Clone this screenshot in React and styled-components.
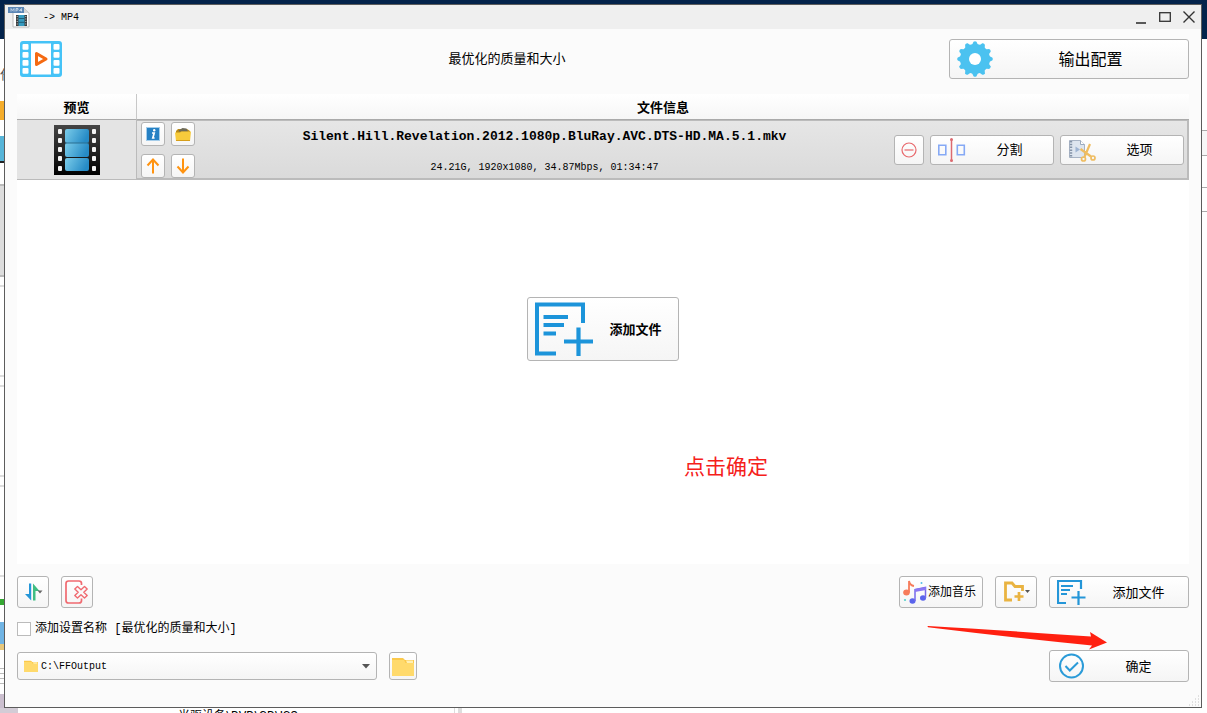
import { useState } from "react";
import styled, { createGlobalStyle } from "styled-components";

function FormatWindow() {
  const [addSettingName, setAddSettingName] = useState(false);
  const [outputPath, setOutputPath] = useState("C:\\FFOutput");

  return (
    <Window>
      <TitleBar>
        <Mp4Icon />
        <Title>-&gt; MP4</Title>
        <WindowButtons>
          <WindowButton aria-label="最小化">
            <svg width="12" height="14" viewBox="0 0 12 14">
              <path d="M1 13h10" stroke="#333" strokeWidth="1.6" />
            </svg>
          </WindowButton>
          <WindowButton aria-label="最大化">
            <svg width="12" height="14" viewBox="0 0 12 14">
              <rect x="0.7" y="2.7" width="10.6" height="8.6" fill="none" stroke="#333" strokeWidth="1.3" />
            </svg>
          </WindowButton>
          <WindowButton aria-label="关闭">
            <svg width="12" height="14" viewBox="0 0 12 14">
              <path d="M0.5 1.5l11 11M11.5 1.5l-11 11" stroke="#333" strokeWidth="1.4" />
            </svg>
          </WindowButton>
        </WindowButtons>
      </TitleBar>

      <Content>
        <Header>
          <VideoIcon />
          <Quality>最优化的质量和大小</Quality>
          <Button $width="240px" $height="40px" $size="16px">
            <GearIcon />
            <Label>输出配置</Label>
          </Button>
        </Header>

        <FileArea>
          <FileTable>
            <thead>
              <tr>
                <PreviewHead>预览</PreviewHead>
                <InfoHead>文件信息</InfoHead>
              </tr>
            </thead>
            <tbody>
              <tr>
                <PreviewCell>
                  <FilmIcon />
                </PreviewCell>
                <InfoCell>
                  <FileRow>
                    <MiniButtons>
                      <Button $width="24px" $height="24px" $icon aria-label="信息">
                        <InfoIcon />
                      </Button>
                      <Button $width="24px" $height="24px" $icon aria-label="打开文件夹">
                        <OpenFolderIcon />
                      </Button>
                      <Button $width="24px" $height="24px" $icon aria-label="上移">
                        <MoveIcon d="M8 15.5V1.5M2.5 7.5L8 1.5L13.5 7.5" />
                      </Button>
                      <Button $width="24px" $height="24px" $icon aria-label="下移">
                        <MoveIcon d="M8 0.5V14.5M2.5 8.5L8 14.5L13.5 8.5" />
                      </Button>
                    </MiniButtons>
                    <FileText>
                      <FileName>Silent.Hill.Revelation.2012.1080p.BluRay.AVC.DTS-HD.MA.5.1.mkv</FileName>
                      <FileDetails>24.21G, 1920x1080, 34.87Mbps, 01:34:47</FileDetails>
                    </FileText>
                    <RowActions>
                      <Button $width="30px" $height="30px" $icon aria-label="移除">
                        <RemoveIcon />
                      </Button>
                      <Button $width="124px" $height="30px">
                        <SplitIcon />
                        <Label>分割</Label>
                      </Button>
                      <Button $width="124px" $height="30px">
                        <OptionIcon />
                        <Label>选项</Label>
                      </Button>
                    </RowActions>
                  </FileRow>
                </InfoCell>
              </tr>
            </tbody>
          </FileTable>
          <CenterButton $width="152px" $height="64px" $bold>
            <AddFileIcon width="58" height="54" thick />
            <Label>添加文件</Label>
          </CenterButton>
          <Hint>点击确定</Hint>
        </FileArea>

        <Toolbar>
          <ButtonGroup>
            <Button $width="32px" $height="32px" $icon aria-label="排序">
              <SortIcon />
            </Button>
            <Button $width="32px" $height="32px" $icon aria-label="清空列表">
              <ClearIcon />
            </Button>
          </ButtonGroup>
          <ButtonGroup>
            <Button $width="84px" $height="32px" $size="12px" $tight>
              <MusicIcon />
              <Label>添加音乐</Label>
            </Button>
            <Button $width="42px" $height="32px" $icon aria-label="添加文件夹">
              <AddFolderIcon />
            </Button>
            <Button $width="140px" $height="32px">
              <AddFileIcon width="32" height="26" />
              <Label>添加文件</Label>
            </Button>
          </ButtonGroup>
        </Toolbar>

        <CheckLabel>
          <Checkbox
            type="checkbox"
            checked={addSettingName}
            onChange={(e) => setAddSettingName(e.target.checked)}
          />
          添加设置名称 [最优化的质量和大小]
        </CheckLabel>

        <Footer>
          <ButtonGroup>
            <SelectBox>
              <FolderIcon width="14" height="12" />
              <Select
                aria-label="输出文件夹"
                value={outputPath}
                onChange={(e) => setOutputPath(e.target.value)}
              >
                <option>C:\FFOutput</option>
              </Select>
              <Caret width="8" height="5" viewBox="0 0 8 5">
                <path d="M0 0h8L4 4.5z" fill="#555" />
              </Caret>
            </SelectBox>
            <Button $width="28px" $height="28px" $icon aria-label="浏览">
              <FolderIcon width="22" height="19" />
            </Button>
          </ButtonGroup>
          <Button $width="140px" $height="32px">
            <OkIcon />
            <Label>确定</Label>
          </Button>
          <Arrow width="180" height="28" viewBox="0 0 180 28">
            <path d="M1 1Q0 1.5 1 2.3Q80 12 165 20.5L162 24.5L180 17.5L163 7L164 11.5Q70 5 1 1Z" fill="#ff2010" />
          </Arrow>
        </Footer>
      </Content>
      <Grip width="12" height="12" viewBox="0 0 12 12">
        <path
          d="M10 2h1M7 5h1M10 5h1M4 8h1M7 8h1M10 8h1M1 11h1M4 11h1M7 11h1M10 11h1"
          stroke="#c4c4c4"
        />
      </Grip>
    </Window>
  );
}

function App() {
  return (
    <Desktop>
      <GlobalStyle />
      <Middle>
        <LeftEdge>任</LeftEdge>
        <FormatWindow />
        <RightEdge />
      </Middle>
      <BottomEdge>光驱设备\DVD\CD\ISO</BottomEdge>
    </Desktop>
  );
}

function Mp4Icon() {
  return (
    <svg width="22" height="22" viewBox="0 0 22 22">
      <path d="M5 2h11l5 5v14H5z" fill="#fff" stroke="#bbb" />
      <path d="M16 2l5 5h-5z" fill="#d5d5d5" />
      <rect x="0" y="1" width="16" height="6" fill="#5b86b5" />
      <path
        d="M3 5.500v-3l1.500 2 1.500-2v3M8 5.500v-3h2v1.600h-2M13.500 5.500v-3l-2 2h2.600"
        fill="none"
        stroke="#dfe9f3"
        strokeWidth="0.7"
      />
      <rect x="8" y="9" width="11" height="11" fill="#3c3c3c" />
      <rect x="10.5" y="9" width="6" height="11" fill="#369bc0" />
      <path d="M10.5 12.5h6M10.5 16.3h6" stroke="#215c75" />
      <path d="M9.2 10v10M17.8 10v10" stroke="#ccc" strokeDasharray="1 1.5" />
    </svg>
  );
}

function VideoIcon() {
  const holes = [3, 11, 19, 27];
  return (
    <svg width="48" height="36" viewBox="0 0 48 36">
      <rect x="3" y="0" width="42" height="36" rx="3" fill="#45c3f7" />
      <rect x="14" y="2.5" width="20" height="31" fill="#fff" />
      {holes.map((y) => (
        <g key={y} fill="#fff">
          <rect x="5.5" y={y} width="6" height="5.8" rx="1" />
          <rect x="36.5" y={y} width="6" height="5.8" rx="1" />
        </g>
      ))}
      <path d="M19.5 12.5v11L29 18z" fill="none" stroke="#f56a12" strokeWidth="3" strokeLinejoin="round" />
    </svg>
  );
}

function GearIcon() {
  const teeth = Array.from({ length: 12 }, (_, i) => i * 30);
  return (
    <svg width="36" height="36" viewBox="0 0 36 36">
      <g fill="#4bc2f0">
        <circle cx="18" cy="18" r="15" />
        {teeth.map((angle) => (
          <path
            key={angle}
            d="M14.5 5L16.5 0.8Q18 -0.4 19.5 0.8L21.5 5z"
            transform={`rotate(${angle} 18 18)`}
          />
        ))}
      </g>
      <circle cx="18" cy="18" r="6" fill="#fff" />
    </svg>
  );
}

function FilmIcon() {
  const holes = [4, 13, 22, 31, 41];
  return (
    <svg width="46" height="50" viewBox="0 0 46 50">
      <defs>
        <linearGradient id="film" x1="0" y1="0" x2="0" y2="1">
          <stop offset="0" stopColor="#444" />
          <stop offset="0.7" stopColor="#161616" />
          <stop offset="1" stopColor="#000" />
        </linearGradient>
        <linearGradient id="frame" x1="0" y1="0" x2="1" y2="0.3">
          <stop offset="0" stopColor="#7ccdea" />
          <stop offset="1" stopColor="#268bc6" />
        </linearGradient>
      </defs>
      <rect width="46" height="50" fill="url(#film)" />
      {holes.map((y) => (
        <g key={y} fill="#f3f3f3">
          <rect x="4" y={y} width="4" height="5" rx="1" />
          <rect x="38" y={y} width="4" height="5" rx="1" />
        </g>
      ))}
      <rect x="11" y="4" width="24" height="14" rx="2" fill="url(#frame)" />
      <rect x="11" y="18" width="24" height="14" rx="2" fill="url(#frame)" />
      <rect x="11" y="33" width="24" height="13" rx="2" fill="url(#frame)" />
      <path d="M11 18h24" stroke="#2b6f91" />
    </svg>
  );
}

function InfoIcon() {
  return (
    <svg width="14" height="14" viewBox="0 0 14 14">
      <rect x="0.5" y="0.5" width="13" height="13" fill="#2681c4" stroke="#a5cdea" />
      <path d="M6 6h2.2l-1.4 5h1.8" fill="none" stroke="#fff" strokeWidth="1.7" />
      <circle cx="8.2" cy="3.3" r="1.2" fill="#fff" />
    </svg>
  );
}

function OpenFolderIcon() {
  return (
    <svg width="16" height="15" viewBox="0 0 16 15">
      <path d="M1 4l2-2h9l3 2v9H1z" fill="#b98b18" />
      <path d="M3.5 3.5l4-2.5 4 0.5 1.5 3H4z" fill="#6d6a58" />
      <path d="M0 5.5h5l1.5-1H16L15 14H1z" fill="#f7cb3c" />
      <path d="M1 13.5h14" stroke="#d69e1a" />
    </svg>
  );
}

function MoveIcon({ d }) {
  return (
    <svg width="16" height="16" viewBox="0 0 16 16">
      <path d={d} fill="none" stroke="#ff9310" strokeWidth="2" />
    </svg>
  );
}

function RemoveIcon() {
  return (
    <svg width="16" height="16" viewBox="0 0 16 16" fill="none" stroke="#e8686c">
      <circle cx="8" cy="8" r="7" strokeWidth="1.2" />
      <path d="M3.5 8h9" strokeWidth="1.2" />
    </svg>
  );
}

function SplitIcon() {
  return (
    <svg width="28" height="24" viewBox="0 0 28 24">
      <path d="M0.8 7.3h7v9.4h-7zM19.3 7.3h7v9.4h-7z" fill="none" stroke="#86a9f5" strokeWidth="1.6" />
      <path d="M13.5 1v22" stroke="#dc6a70" strokeWidth="1.5" />
      <circle cx="13.5" cy="1.5" r="1.5" fill="#dc6a70" />
      <circle cx="13.5" cy="22.5" r="1.5" fill="#dc6a70" />
    </svg>
  );
}

function OptionIcon() {
  return (
    <svg width="28" height="24" viewBox="0 0 28 24">
      <path d="M1.5 2.5h11l4 4v13h-15z" fill="#dde5ef" stroke="#a7b3c4" />
      <path d="M12.5 2.5v4h4" fill="#fff" stroke="#9aabc0" />
      <path d="M3 3v17" stroke="#8493a7" strokeWidth="2.4" strokeDasharray="1.5 1.3" />
      <path d="M7.5 8.500v6l4.500-3z" fill="#9eb4d2" />
      <g fill="none" stroke="#efbd62">
        <path d="M12.5 11l10.5 7.500M22 6L16.500 19" strokeWidth="2.2" />
        <circle cx="15.5" cy="21" r="2" strokeWidth="1.7" />
        <circle cx="25" cy="20" r="2" strokeWidth="1.7" />
      </g>
    </svg>
  );
}

function AddFileIcon({ width, height, thick }) {
  if (!thick) {
    return (
      <svg width={width} height={height} viewBox="0 0 32 26" fill="none" stroke="#2496d8">
        <path d="M24 10V2H1V24H9" strokeWidth="2.2" />
        <path d="M4 7h12M4 11h9M4 15h6" strokeWidth="1.8" />
        <path d="M21.5 12v14M14.500 18.500h14" strokeWidth="2.2" />
      </svg>
    );
  }
  return (
    <svg width={width} height={height} viewBox="0 0 58 54" fill="none" stroke="#1c94da" strokeWidth="4">
      <path d="M48 21V2.5H2V51.5H21" />
      <path d="M8.5 15H33M8.5 23H29M8.5 31.5H21" />
      <path d="M43.5 25.5V54M29 39.5H58" strokeWidth="4.2" />
    </svg>
  );
}

function SortIcon() {
  return (
    <svg width="20" height="20" viewBox="0 0 20 20">
      <path d="M2 12H6V1.5H8.2V18.500z" fill="#2496d8" />
      <path d="M10 1.5L16.500 9H12.500V18.500H10z" fill="#3fbd83" />
      <path d="M14.5 8.500h5L17 11.500z" fill="#666" />
    </svg>
  );
}

function ClearIcon() {
  return (
    <svg width="24" height="24" viewBox="0 0 24 24" fill="none" stroke="#f06a70">
      <path
        d="M16.5 5V3.5Q16.500 1 14 1H3.500Q1 1 1 3.500V20.500Q1 23 3.500 23H14Q16.500 23 16.500 20.500V18.500"
        strokeWidth="1.7"
      />
      <path
        d="M12.500 6.500l3.500 3.200 3.500-3.200 2.700 2.500-3.400 3.300 3.400 3.200-2.700 2.500-3.500-3.200-3.500 3.200-2.700-2.500 3.400-3.200-3.400-3.300z"
        strokeWidth="1.4"
        strokeLinejoin="round"
      />
    </svg>
  );
}

function MusicIcon() {
  return (
    <svg width="24" height="24" viewBox="0 0 24 24">
      <ellipse cx="3.5" cy="12.5" rx="3.3" ry="3" fill="#f77c5b" />
      <path d="M6 12.5V1q1 4.500 5 5" fill="none" stroke="#f77c5b" strokeWidth="1.8" />
      <ellipse cx="9.5" cy="21" rx="3" ry="2.7" fill="#5a64ec" />
      <ellipse cx="20" cy="18" rx="3" ry="2.7" fill="#5a64ec" />
      <path d="M12 21V9.500L22.500 7.500V18" fill="none" stroke="#7569ec" strokeWidth="1.5" />
      <path d="M12 9l11-2v3l-11 2z" fill="#8b77f2" />
      <circle cx="18.5" cy="3" r="1" fill="#56bfe8" />
      <circle cx="2" cy="20" r="1.1" fill="#56d1c9" />
    </svg>
  );
}

function AddFolderIcon() {
  return (
    <svg width="28" height="22" viewBox="0 0 28 22">
      <path d="M10 19H3.500V2H10L13 5.500H20.500V10" fill="none" stroke="#e9b341" strokeWidth="2.8" />
      <path d="M17 11v9M12.500 15.500h9" stroke="#e9b341" strokeWidth="2.7" />
      <path d="M23 9h5l-2.500 3z" fill="#555" />
    </svg>
  );
}

function FolderIcon({ width, height }) {
  return (
    <svg width={width} height={height} viewBox="0 0 22 19" preserveAspectRatio="none">
      <path d="M0 1h11l2 2h9v15H0z" fill="#fbc94b" />
      <path d="M0 3h12l1.500 3H22v13H0z" fill="#ffda6c" />
      <path d="M14 3.500h7v2.500h-6z" fill="#fff0b5" />
    </svg>
  );
}

function OkIcon() {
  return (
    <svg width="32" height="26" viewBox="0 0 32 26" fill="none" stroke="#2b9bd8" strokeWidth="2">
      <circle cx="14.5" cy="13" r="11.500" />
      <path d="M8.5 13l4.300 4.500L21 9.500" />
    </svg>
  );
}

const GlobalStyle = createGlobalStyle`
  * {
    box-sizing: border-box;
  }

  body {
    margin: 0;
    font-family: "Liberation Mono", "Noto Sans CJK SC", monospace;
    font-size: 13px;
    line-height: 16px;
    color: #000;
  }
`;

const Desktop = styled.div`
  display: flex;
  flex-direction: column;
  min-height: 100vh;
  padding-top: 4px;
  background: linear-gradient(#03234b 39px, #fff 39px);
`;

const Middle = styled.div`
  display: flex;
  flex: 1;
`;

const LeftEdge = styled.div`
  width: 4px;
  padding-top: 64px;
  overflow: hidden;
  color: #555;
  background: linear-gradient(
    transparent 97px,
    #f5ad2b 97px 116px,
    transparent 116px 132px,
    #57b5d9 132px 157px,
    #222 157px 159px,
    transparent 159px 180px,
    #bbb 180px 182px,
    #ddd 182px 271px,
    #bbb 271px 273px,
    transparent 273px 281px,
    #ddd 281px 283px,
    transparent 283px 371px,
    #ddd 371px 373px,
    transparent 373px 381px,
    #ddd 381px 383px,
    transparent 383px 471px,
    #ddd 471px 473px,
    transparent 473px 481px,
    #ddd 481px 483px,
    transparent 483px 571px,
    #ddd 571px 573px,
    transparent 573px 595px,
    #35a832 595px 601px,
    transparent 601px 618px,
    #70b4e4 618px 640px,
    #e7c77c 640px 646px,
    transparent 646px 664px,
    #bbb 664px 665px,
    transparent 665px 669px,
    #bbb 669px 670px,
    transparent 670px 674px,
    #bbb 674px 675px,
    transparent 675px 679px,
    #bbb 679px 680px,
    transparent 680px 690px,
    #cbbfcf 690px
  );
`;

const RightEdge = styled.div`
  width: 5px;
  background: linear-gradient(
    transparent 126px,
    #aaa 126px 127px,
    #f7f7f7 127px 151px,
    #aaa 151px 152px,
    transparent 152px 183px,
    #aaa 183px 184px,
    transparent 184px 207px,
    #aaa 207px 208px,
    transparent 208px
  );
`;

const BottomEdge = styled.div`
  height: 5px;
  padding-left: 178px;
  overflow: hidden;
  font-family: Roboto, "Noto Sans CJK SC", sans-serif;
  font-size: 12px;
  background: linear-gradient(90deg, #d3ccd6 18px, #fff 18px 454px, #ddd 454px 455px, #fff 455px 458px, #ddd 458px 462px, #fff 462px);
`;

const Window = styled.main`
  position: relative;
  display: flex;
  flex: 1;
  flex-direction: column;
  border: 1px solid #5c5c5c;
  background: #fbfbfb;
`;

const TitleBar = styled.header`
  display: flex;
  align-items: center;
  height: 24px;
  padding: 0 6px 0 3px;
  background: #efefef;
`;

const Title = styled.h1`
  flex: 1;
  margin: 0 0 0 13px;
  padding-top: 2px;
  font-size: 10px;
  font-weight: normal;
`;

const WindowButtons = styled.div`
  display: flex;
  gap: 12px;
`;

const WindowButton = styled.button`
  display: flex;
  padding: 0;
  border: 0;
  background: none;
`;

const Content = styled.div`
  display: flex;
  flex: 1;
  flex-direction: column;
  padding: 10px 12px 25px;
`;

const Header = styled.div`
  display: grid;
  grid-template-columns: 240px 1fr 240px;
  align-items: center;
  margin-bottom: 15px;
`;

const Quality = styled.div`
  margin-right: 192px;
  padding-top: 2px;
  text-align: center;
`;

const Button = styled.button`
  display: flex;
  flex-shrink: 0;
  align-items: center;
  justify-content: center;
  width: ${(props) => props.$width};
  height: ${(props) => props.$height};
  padding: ${(props) => (props.$icon ? "0" : props.$tight ? "0 5px 0 3px" : "0 0 0 7px")};
  border: 1px solid #b4b4b4;
  border-radius: 3px;
  background: linear-gradient(#fff, #f5f5f5);
  color: #000;
  font-family: inherit;
  font-size: ${(props) => props.$size || "13px"};
  font-weight: ${(props) => (props.$bold ? "bold" : "normal")};

  svg {
    flex-shrink: 0;
  }
`;

const Label = styled.span`
  flex: 1;
  padding-bottom: 2px;
  text-align: center;
  white-space: nowrap;
`;

const FileArea = styled.section`
  position: relative;
  display: grid;
  flex: 1;
  margin-bottom: 12px;
  background: #fff;
`;

const FileTable = styled.table`
  grid-area: 1 / 1;
  align-self: start;
  width: 100%;
  border-collapse: separate;
  border-spacing: 0;
  table-layout: fixed;
`;

const InfoHead = styled.th`
  height: 26px;
  padding: 5px 0 0;
  border-bottom: 1px solid #aaa;
  background: linear-gradient(#fff, #f6f6f6);
`;

const PreviewHead = styled(InfoHead)`
  width: 120px;
  border-right: 1px solid #c8c8c8;
`;

const InfoCell = styled.td`
  height: 60px;
  padding: 0;
  border: solid #bbb;
  border-width: 1px 2px 2px 0;
  background: linear-gradient(#e6e6e6, #dadada);
`;

const PreviewCell = styled(InfoCell)`
  border-width: 0 1px 1px 0;
  background: #e4e4e4;
  text-align: center;

  svg {
    display: block;
    margin: 0 auto;
  }
`;

const FileRow = styled.div`
  display: flex;
  align-items: center;
  padding: 0 3px 0 4px;
`;

const MiniButtons = styled.div`
  display: grid;
  grid-template-columns: 24px 24px;
  gap: 8px 6px;
  margin-top: 1px;
`;

const FileText = styled.div`
  display: flex;
  flex: 1;
  flex-direction: column;
  gap: 15px;
  padding-top: 5px;
  text-align: center;
`;

const FileName = styled.strong`
  font-size: 13px;
`;

const FileDetails = styled.span`
  font-size: 10px;
`;

const RowActions = styled.div`
  display: flex;
  gap: 6px;
`;

const CenterButton = styled(Button)`
  grid-area: 1 / 1;
  place-self: center;
`;

const Hint = styled.div`
  position: absolute;
  top: 363px;
  left: calc(50% + 81px);
  color: #f5201a;
  font-size: 21px;
  line-height: 24px;
`;

const Toolbar = styled.div`
  display: flex;
  justify-content: space-between;
`;

const ButtonGroup = styled.div`
  display: flex;
  align-items: center;
  gap: 12px;
`;

const CheckLabel = styled.label`
  display: flex;
  align-items: center;
  align-self: flex-start;
  gap: 4px;
  margin: 13px 0;
  font-size: 12px;
`;

const Checkbox = styled.input`
  width: 14px;
  height: 14px;
  margin: 0;
  border: 1px solid #bbb;
  background: #fff;
  appearance: none;

  &:checked {
    background: #2496d8;
  }
`;

const Footer = styled.footer`
  position: relative;
  display: flex;
  align-items: center;
  justify-content: space-between;
`;

const SelectBox = styled.div`
  position: relative;
  width: 360px;

  > svg {
    position: absolute;
    top: 8px;
    left: 7px;
    pointer-events: none;
  }
`;

const Select = styled.select`
  display: block;
  width: 100%;
  height: 28px;
  padding: 0 23px;
  border: 1px solid #b4b4b4;
  border-radius: 3px;
  background: linear-gradient(#fff, #f5f5f5);
  color: #000;
  font-family: inherit;
  font-size: 10px;
  appearance: none;
`;

const Caret = styled.svg`
  && {
    top: 12px;
    right: 7px;
    left: auto;
  }
`;

const Arrow = styled.svg`
  position: absolute;
  top: -25px;
  right: 82px;
  pointer-events: none;
`;

const Grip = styled.svg`
  position: absolute;
  right: 1px;
  bottom: 1px;
`;

export default App;
